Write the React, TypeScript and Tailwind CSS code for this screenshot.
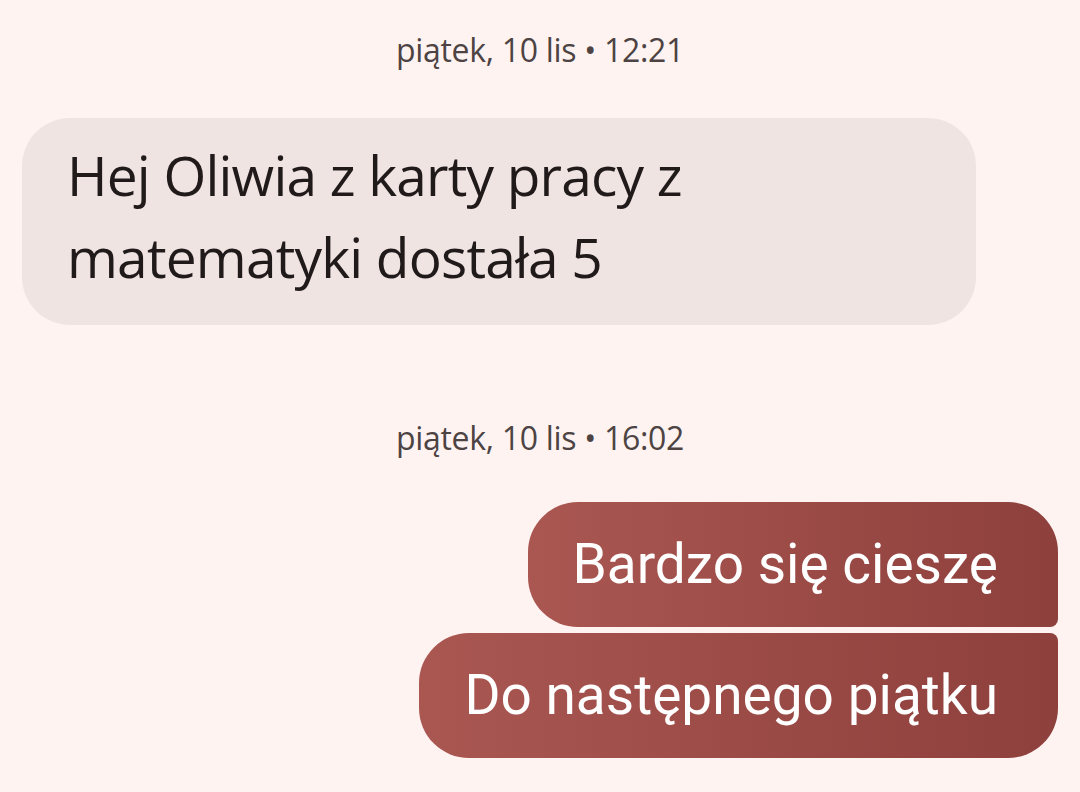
import React from 'react';

const messages = [
  { text: 'Bardzo się cieszę', shape: 'rounded-tl-[50px] rounded-tr-[50px] rounded-bl-[50px] rounded-br-[8px]' },
  { text: 'Do następnego piątku', shape: 'rounded-tl-[50px] rounded-tr-[8px] rounded-bl-[50px] rounded-br-[50px]' },
];

const Stamp: React.FC<{ label: string; className?: string }> = ({ label, className }) => (
  <div className={`flex justify-center text-[32px] leading-[40px] text-[#4d4343] font-['Open_Sans',sans-serif] tracking-[-0.3px] ${className ?? ''}`}>
    {label}
  </div>
);

export default function App() {
  return (
    <div className="w-[1080px] h-[792px] bg-[#fef3f1] overflow-hidden flex flex-col">
      <Stamp label="piątek, 10 lis • 12:21" className="mt-[30px]" />

      {/* wiadomość przychodząca */}
      <div className="mt-[48px] ml-[22px] w-[954px] h-[207px] rounded-[48px] bg-[#f0e4e2] pl-[45px] pt-[16px]">
        <p className="text-[#201a1a] text-[55px] leading-[82px] font-['Open_Sans',sans-serif] tracking-[-0.8px]">
          Hej Oliwia z karty pracy z<br />matematyki dostała 5
        </p>
      </div>

      <Stamp label="piątek, 10 lis • 16:02" className="mt-[93px]" />

      {/* wiadomości wysłane */}
      <div className="mt-[44px] mr-[22px] flex flex-col items-end gap-[6px]">
        {messages.map((m) => (
          <div
            key={m.text}
            className={`h-[125px] pl-[45px] pr-[60px] flex items-center bg-gradient-to-r from-[#aa5752] to-[#8e403c] text-white text-[55px] font-['Roboto',sans-serif] ${m.shape}`}
          >
            {m.text}
          </div>
        ))}
      </div>
    </div>
  );
}
